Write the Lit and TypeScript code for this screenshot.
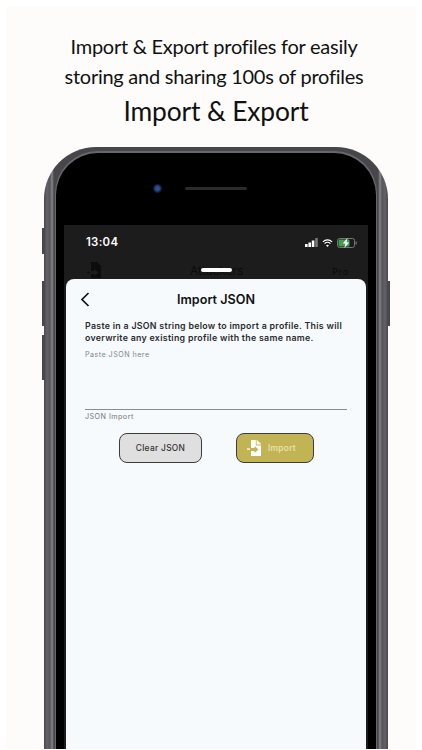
import { LitElement, html, css } from "lit";
import { customElement } from "lit/decorators.js";

@customElement("app-root")
export class AppRoot extends LitElement {
  static styles = css`
    :host { display: block; width: 422px; height: 750px; background: #fff; overflow: hidden; font-family: Inter, "Liberation Sans", sans-serif; }
    .sheet { box-sizing: border-box; margin: 6px 6px 0; width: 410px; height: 743px; background: #fdfcfb; border-radius: 4px 4px 0 0; display: flex; flex-direction: column; align-items: center; padding-top: 25px; }
    .headline { font-family: Lato, sans-serif; font-size: 20px; letter-spacing: -0.26px; line-height: 30px; color: #111; text-align: center; margin-left: 6px; }
    .title { font-family: Lato, sans-serif; font-size: 26.4px; letter-spacing: -0.14px; line-height: 36px; color: #111; margin: 2px 0 0 10px; }
    .phone { position: relative; box-sizing: border-box; width: 344px; height: 602px; margin: 18px 0 0 10px; flex: none; border-radius: 52px 52px 0 0; background: linear-gradient(90deg, #47474c, #626268 3px, #55555a 6px, #86868a 8px, #47474b 10px, #47474b calc(100% - 10px), #86868a calc(100% - 8px), #55555a calc(100% - 6px), #626268 calc(100% - 3px), #47474c); padding: 6px 12px 0; }
    .face { height: 100%; box-sizing: border-box; background: #000; border-radius: 42px 42px 0 0; padding: 72px 8px 0; display: flex; flex-direction: column; box-shadow: 0 -1px 0 1px #68686c; }
    .btn { position: absolute; width: 2px; background: #46464b; }
    .b1 { left: -2px; top: 81px; height: 26px; }
    .b2 { left: -2px; top: 134px; height: 45px; }
    .b3 { left: -2px; top: 188px; height: 45px; }
    .b4 { right: -2px; top: 134px; height: 45px; }
    .cam { position: absolute; left: 108.5px; top: 36.5px; width: 9px; height: 9px; border-radius: 50%; background: radial-gradient(circle, #2a4f9a 0 30%, #152544 55%, #0a0a0f 80%); }
    .speaker { position: absolute; left: 141px; top: 40px; width: 62px; height: 3px; border-radius: 2px; background: #2b2b2d; }
    .screen { flex: 1; min-height: 0; background: #1c1c1c; display: flex; flex-direction: column; padding: 0 2px; position: relative; }
    .status { height: 26px; padding: 0 9px 0 20px; display: flex; align-items: flex-end; justify-content: space-between; color: #fff; font-size: 11.4px; font-weight: 600; letter-spacing: 0.3px; }
    .status span { line-height: 17px; }
    .indicators { display: flex; align-items: center; gap: 4px; height: 17px; }
    .under { box-sizing: border-box; height: 28px; padding: 0 17px 1px 20px; display: flex; align-items: flex-end; justify-content: space-between; color: #0c0c0c; font-size: 11px; position: relative; }
    .under .mid { font-size: 12px; position: absolute; left: 124px; bottom: 1px; color: #0b0b0b; }
    .under .pro { font-size: 9px; letter-spacing: 0.8px; color: #0a0a0a; line-height: 12px; }
    .handle { position: absolute; left: 137px; top: 43px; width: 31px; height: 4px; border-radius: 2px; background: #fff; }
    .modal { flex: 1; background: #f6fafd; border-radius: 8px 8px 0 0; padding: 0 19px; color: #1c1c1e; display: flex; flex-direction: column; }
    .bar { height: 38px; position: relative; display: flex; align-items: center; justify-content: center; font-size: 12.6px; font-weight: 600; color: #111; margin-top: 1px; }
    .back { position: absolute; left: -5px; top: 12px; }
    .intro { margin: 2px 0 0; font-size: 8.8px; font-weight: 600; line-height: 12px; letter-spacing: 0.3px; color: #2a2a2e; }
    .ph { margin-top: 6px; font-size: 7.2px; line-height: 10px; letter-spacing: 0.45px; color: #86868a; }
    .line { height: 1px; background: #8c8c90; margin-top: 49px; }
    .help { margin-top: 2px; font-size: 7.2px; line-height: 10px; letter-spacing: 0.45px; color: #77777b; }
    .actions { display: flex; gap: 34px; margin: 11px 0 0 34px; }
    .action { box-sizing: border-box; height: 30px; border-radius: 8px; border: 1px solid #3c3c3c; display: flex; align-items: center; justify-content: center; font-size: 8.4px; font-weight: 500; letter-spacing: 0.3px; font-family: inherit; padding: 0; }
    .clear { width: 83px; background: #dfdfdf; color: #333; }
    .import { width: 78px; background: #c2b455; color: #ece6b8; gap: 6px; padding-right: 8px; }
  `;

  render() {
    const fileIcon = html`<svg width="16" height="18" viewBox="0 0 16 18"><path fill="#fff" d="M5 1h6l4 4v12H5v-5h3.5v2l4-3.5-4-3.5v2H5z"/><path fill="#c2b455" d="M10.6 1v4.6h4.4v.8h-5.2V1z"/><path fill="#fff" d="M1 9.4h3v1.3H1z"/></svg>`;
    return html`
      <div class="sheet">
        <div class="headline">Import &amp; Export profiles for easily<br />storing and sharing 100s of profiles</div>
        <div class="title">Import &amp; Export</div>
        <div class="phone">
          <i class="btn b1"></i><i class="btn b2"></i><i class="btn b3"></i><i class="btn b4"></i>
          <div class="face">
            <i class="cam"></i><i class="speaker"></i>
            <div class="screen">
              <div class="status">
                <span>13:04</span>
                <div class="indicators">
                  <svg width="13" height="9" viewBox="0 0 13 9"><rect x="0" y="6" width="2.6" height="3" fill="#fff"/><rect x="3.4" y="4.5" width="2.6" height="4.5" fill="#fff"/><rect x="6.8" y="2.5" width="2.6" height="6.5" fill="#fff"/><rect x="10.2" y="0" width="2.6" height="9" fill="#777"/></svg>
                  <svg width="11" height="8" viewBox="0 0 12 9"><path fill="none" stroke="#fff" stroke-width="1.3" d="M.8 3.2a7.4 7.4 0 0 1 10.4 0M2.7 5.2a4.7 4.7 0 0 1 6.6 0"/><path fill="#fff" d="M6 9 4.4 7.1a2.4 2.4 0 0 1 3.2 0z"/></svg>
                  <svg width="20" height="10" viewBox="0 0 20 10"><rect x=".5" y=".5" width="17" height="9" rx="2" fill="none" stroke="#777"/><rect x="1.5" y="1.5" width="11" height="7" rx="1" fill="#3fa04f"/><rect x="18.5" y="3.5" width="1.2" height="3" fill="#777"/><path fill="#fff" d="M10.5 0 5.8 5.6h2.6L7.4 10l4.8-5.6H9.5z"/></svg>
                </div>
              </div>
              <div class="under">
                <svg width="16" height="16" viewBox="0 0 16 16"><path fill="#0c0c0c" d="M5 0h6l4 4v12H5v-4h3.5v2l4-3.5-4-3.5v2H5zM1 9.8h3v1.4H1z"/></svg>
                <span class="mid">Attackers</span>
                <span class="pro">Pro</span>
              </div>
              <i class="handle"></i>
              <div class="modal">
                <div class="bar">
                  <svg class="back" width="10" height="15" viewBox="0 0 10 15"><path fill="none" stroke="#111" stroke-width="1.7" d="M8.5 1 2 7.5 8.5 14"/></svg>
                  Import JSON
                </div>
                <p class="intro">Paste in a JSON string below to import a profile. This will overwrite any existing profile with the same name.</p>
                <div class="ph">Paste JSON here</div>
                <div class="line"></div>
                <div class="help">JSON Import</div>
                <div class="actions">
                  <button class="action clear">Clear JSON</button>
                  <button class="action import">${fileIcon}<span>Import</span></button>
                </div>
              </div>
            </div>
          </div>
        </div>
      </div>
    `;
  }
}
